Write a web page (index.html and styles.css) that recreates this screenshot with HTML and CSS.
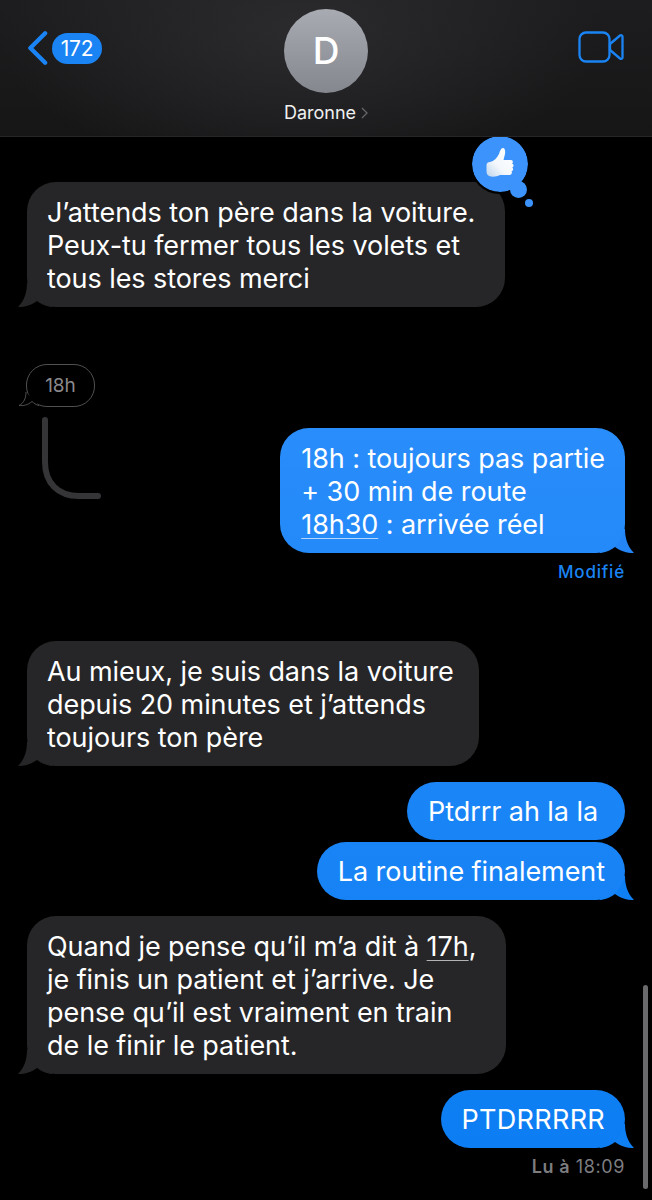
FILE: index.html
```html
<!DOCTYPE html>
<html lang="fr">
<head>
<meta charset="utf-8">
<title>Daronne</title>
<link rel="stylesheet" href="styles.css">
</head>
<body>
<svg class="defs" width="0" height="0" aria-hidden="true">
  <symbol id="tail-left" viewBox="0 0 24 24" overflow="visible"><path d="M9 0C9 8 7 17 0 24C8 24 13 22 19 18C22 20 26 23 34 24L34 0Z"/></symbol>
  <symbol id="tail-right" viewBox="0 0 24 24" overflow="visible"><path d="M15 0C15 8 17 17 24 24C16 24 11 22 5 18C2 20 -2 23 -10 24L-10 0Z"/></symbol>
</svg>

<div class="phone">
  <header class="header">
    <div class="back">
      <svg class="chevron" viewBox="0 0 22 36"><path d="M19 2.500L3.500 18L19 33.500"/></svg>
      <span class="badge">172</span>
    </div>
    <div class="contact">
      <div class="avatar">D</div>
      <div class="name">Daronne<svg class="name-arrow" viewBox="0 0 7 12"><path d="M1 1L6 6L1 11"/></svg></div>
    </div>
    <svg class="video" viewBox="0 0 46 32"><rect x="1.500" y="1.500" width="30" height="29" rx="6.500"/><path d="M32 13L42 4.500C43 3.700 44.500 4.200 44.500 5.500V26.500C44.500 27.800 43 28.300 42 27.500L32 19Z"/></svg>
  </header>

  <main class="thread">
    <div class="msg in first">
      <div class="bubble">J’attends ton père dans la voiture.<br>Peux-tu fermer tous les volets et<br>tous les stores merci<svg class="tail"><use href="#tail-left"/></svg></div>
      <div class="reaction">
        <svg class="thumb" viewBox="0 0 28 30">
          <defs><linearGradient id="thumb-shade" x1="1" y1="0" x2="0" y2="1"><stop offset="0" stop-color="#ffffff"/><stop offset="0.600" stop-color="#f4f8fc"/><stop offset="1" stop-color="#bcd4ec"/></linearGradient></defs>
          <path d="M0.500 17C0.500 15 2 14 4 14C8 13 11 10 13 6C14 3 15 0 17 0C19 0 19.500 3 19 6C18.500 8 18 10 17.500 12H25C27 12 27.500 14.500 26 15.500C28 16 28 19 26.300 19.500C27.700 20.500 27.200 23 25.500 23.300C26.500 24.500 25.700 27 23.500 27H14C10 29 6 29 3 28C1 27 0.500 25 0.500 23Z" fill="url(#thumb-shade)"/>
        </svg>
        <span class="reaction-dot"></span>
        <span class="reaction-speck"></span>
      </div>
    </div>

    <div class="reply-row">
      <div class="quote">
        <div class="quote-bubble">18h<svg class="quote-tail" viewBox="0 0 22 18"><path d="M8 3C8 9 6 14 1 16.500C5 17 10 16 14 12.500C16 14 18 16 21 16.500"/></svg></div>
        <svg class="quote-line" viewBox="0 0 60 82"><path d="M3 3V45C3 66 16 79 37 79H56"/></svg>
      </div>
      <div class="msg out edited">
        <div class="bubble">18h : toujours pas partie<br>+ 30 min de route<br><span class="link">18h30</span> : arrivée réel<svg class="tail"><use href="#tail-right"/></svg></div>
        <div class="status modified">Modifié</div>
      </div>
    </div>

    <div class="msg in second">
      <div class="bubble">Au mieux, je suis dans la voiture<br>depuis 20 minutes et j’attends<br>toujours ton père<svg class="tail"><use href="#tail-left"/></svg></div>
    </div>

    <div class="msg out s-a">
      <div class="bubble">Ptdrrr ah la la</div>
    </div>
    <div class="msg out s-b">
      <div class="bubble">La routine finalement<svg class="tail"><use href="#tail-right"/></svg></div>
    </div>

    <div class="msg in third">
      <div class="bubble">Quand je pense qu’il m’a dit à <span class="link">17h</span>,<br>je finis un patient et j’arrive. Je<br>pense qu’il est vraiment en train<br>de le finir le patient.<svg class="tail"><use href="#tail-left"/></svg></div>
    </div>

    <div class="msg out s-c">
      <div class="bubble">PTDRRRRR<svg class="tail"><use href="#tail-right"/></svg></div>
      <div class="status read"><b>Lu à</b> 18:09</div>
    </div>
  </main>

  <div class="scrollbar"></div>
</div>
</body>
</html>
```

FILE: styles.css
```css
* { box-sizing: border-box; }

html, body {
  margin: 0;
  background: #000;
}

.defs { position: absolute; }

.phone {
  position: relative;
  width: 652px;
  height: 1200px;
  overflow: hidden;
  background: #000;
  color: #fff;
  font-family: Inter, "Liberation Sans", sans-serif;
}

/* Navigation bar */
.header {
  position: relative;
  z-index: 2;
  height: 137px;
  display: grid;
  grid-template-columns: 1fr auto 1fr;
  align-items: start;
  padding: 0 28px;
  border-bottom: 1px solid #262628;
  background:
    radial-gradient(ellipse 300px 150px at 300px 30px, #2b2b2e 0%, rgba(43, 43, 46, 0) 100%),
    linear-gradient(180deg, #1d1d1f 0%, #161617 100%);
}

.back {
  display: flex;
  align-items: center;
  gap: 4px;
  margin-left: -1px;
  padding-top: 30px;
}

.chevron {
  width: 21px;
  height: 36px;
  fill: none;
  stroke: #1a84f4;
  stroke-width: 4.500;
  stroke-linecap: round;
  stroke-linejoin: round;
}

.badge {
  width: 50px;
  height: 31px;
  border-radius: 16px;
  background: #1a84f4;
  font-size: 21px;
  line-height: 31px;
  text-align: center;
  letter-spacing: -0.300px;
}

.contact {
  display: flex;
  flex-direction: column;
  align-items: center;
  padding-top: 9px;
}

.avatar {
  width: 84px;
  height: 84px;
  border-radius: 50%;
  background: linear-gradient(180deg, #a8abb2 0%, #85878f 100%);
  font-size: 37px;
  font-weight: 500;
  line-height: 84px;
  text-align: center;
}

.name {
  margin-top: 9px;
  font-size: 18px;
  line-height: 22px;
  color: #f0f0f0;
}

.name-arrow {
  width: 7px;
  height: 12px;
  margin-left: 5px;
  fill: none;
  stroke: #66666a;
  stroke-width: 1.300;
}

.video {
  justify-self: end;
  width: 46px;
  height: 32px;
  margin-top: 31px;
  fill: none;
  stroke: #1a84f4;
  stroke-width: 2.300;
  stroke-linejoin: round;
}

/* Message list: its own stacking context, so tails can sit behind bubbles */
.thread {
  position: relative;
  z-index: 0;
  display: flex;
  flex-direction: column;
  padding: 0 27px;
}

.msg {
  position: relative;
  display: flex;
  flex-direction: column;
}

.msg.in { align-items: flex-start; }
.msg.out { align-items: flex-end; }

.bubble {
  position: relative;
  padding: 13.500px 20px 11.500px 21px;
  border-radius: 29px;
  font-size: 27px;
  line-height: 33.200px;
  letter-spacing: -0.070px;
  white-space: nowrap;
}

.in .bubble {
  padding-left: 20px;
  padding-right: 25px;
  background: #262628;
  fill: #262628;
}

.first .bubble,
.third .bubble { padding-right: 30px; }
.s-a .bubble { padding-right: 27px; }
.s-c .bubble { letter-spacing: 0.300px; }

/* Sent bubbles share one gradient anchored to the viewport */
.out .bubble {
  background: linear-gradient(180deg, #3a96ff 0%, #0a7cf2 100%) fixed;
  fill: #0f80f4;
}

.edited .bubble { fill: #2486f6; }

.tail {
  position: absolute;
  bottom: 0;
  z-index: -1;
  width: 24px;
  height: 24px;
  overflow: visible;
}

.in .tail { left: -9px; }
.out .tail { right: -9px; }

.link {
  text-decoration: underline;
  text-decoration-thickness: 1px;
  text-underline-offset: 4px;
  text-decoration-color: rgba(255, 255, 255, 0.65);
}

.first { margin-top: 45px; }

.reaction {
  position: absolute;
  left: 445px;
  top: -46px;
  width: 56px;
  height: 56px;
  border-radius: 50%;
  background: #3b93fb;
  display: flex;
  align-items: center;
  justify-content: center;
  outline: 2px solid #000;
}

.thumb {
  width: 28px;
  height: 30px;
  margin-bottom: 2px;
}

.reaction-dot {
  position: absolute;
  left: 38px;
  top: 45px;
  width: 17px;
  height: 17px;
  border-radius: 50%;
  background: #3b93fb;
}

.reaction-speck {
  position: absolute;
  left: 53px;
  top: 63px;
  width: 8px;
  height: 8px;
  border-radius: 50%;
  background: #3b93fb;
}

.reply-row {
  display: flex;
  justify-content: space-between;
  align-items: flex-start;
  margin-top: 57.400px;
}

.quote {
  display: flex;
  flex-direction: column;
  align-items: flex-start;
}

.quote-bubble {
  position: relative;
  width: 69px;
  height: 43px;
  margin-left: -1px;
  border: 1px solid #505052;
  border-radius: 21px;
  background: #000;
  color: #8a8a8c;
  font-size: 19px;
  line-height: 41px;
  text-align: center;
}

.quote-tail {
  position: absolute;
  left: -9px;
  bottom: -1px;
  width: 22px;
  height: 18px;
  fill: #000;
  stroke: #505052;
  stroke-width: 1;
}

.quote-line {
  width: 60px;
  height: 82px;
  margin: 10px 0 0 15px;
  fill: none;
  stroke: #353537;
  stroke-width: 6;
  stroke-linecap: round;
}

.edited { margin-top: 64px; }

.status {
  font-size: 17px;
  line-height: 20px;
}

.modified {
  margin-top: 9px;
  color: #1a84f4;
  font-weight: 500;
  letter-spacing: 0.800px;
}

.second { margin-top: 59.400px; }
.s-a { margin-top: 16px; }
.s-b { margin-top: 2px; }
.third { margin-top: 16px; }
.s-c { margin-top: 16px; }

.read {
  margin-top: 9px;
  font-size: 18px;
  color: #7d7d80;
  letter-spacing: 0.600px;
}

.read b { font-weight: 600; }

.scrollbar {
  position: absolute;
  right: 4px;
  top: 985px;
  width: 5px;
  height: 204px;
  border-radius: 3px;
  background: #6a6a6c;
}
```
